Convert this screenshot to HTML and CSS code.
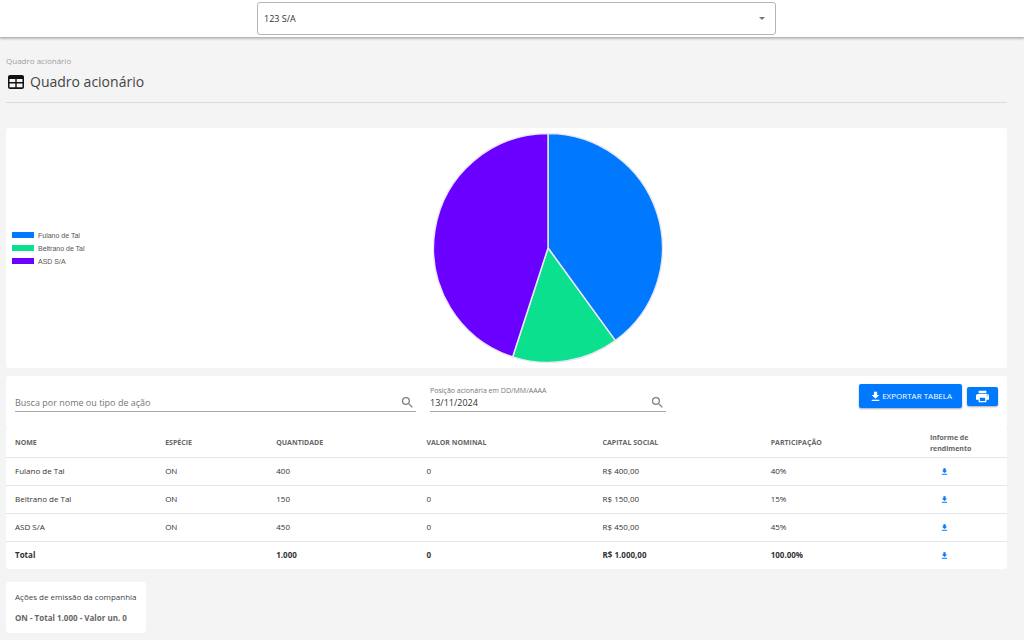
FILE: index.html
```html
<!DOCTYPE html>
<html lang="pt-BR">
<head>
<meta charset="utf-8">
<meta name="viewport" content="width=device-width, initial-scale=1">
<title>Quadro acionário</title>
<link rel="stylesheet" href="styles.css">
</head>
<body>
<svg class="defs" aria-hidden="true">
  <symbol id="download" viewBox="0 0 24 24"><path d="M19 9h-4V3H9v6H5l7 7 7-7zM5 18v2.500h14V18H5z"/></symbol>
  <symbol id="search" viewBox="0 0 24 24"><path d="M15.500 14h-.79l-.28-.27A6.471 6.471 0 0 0 16 9.500 6.500 6.500 0 1 0 9.500 16c1.610 0 3.090-.59 4.230-1.570l.27.28v.79l5 4.990L20.490 19l-4.990-5zm-6 0C7.010 14 5 11.990 5 9.500S7.010 5 9.500 5 14 7.010 14 9.500 11.990 14 9.500 14z"/></symbol>
</svg>
<header class="topbar">
  <div class="company">
    <select class="company-select" aria-label="Empresa"><option>123 S/A</option></select>
    <svg class="caret" viewBox="0 0 6 3" aria-hidden="true"><path d="M0 0h6L3 3z"/></svg>
  </div>
</header>
<main class="page">
  <div class="heading">
    <nav class="breadcrumb" aria-label="Localização">Quadro acionário</nav>
    <h1 class="title">
      <svg class="title-icon" viewBox="0 0 16 14" aria-hidden="true"><path fill-rule="evenodd" d="M2 0h12a2 2 0 0 1 2 2v10a2 2 0 0 1-2 2H2a2 2 0 0 1-2-2V2a2 2 0 0 1 2-2zM1.500 4v3h5.800V4zM8.700 4v3h5.800V4zM1.500 8.500v3.800h5.800V8.500zM8.700 8.500v3.800h5.800V8.500z"/></svg>
      Quadro acionário
    </h1>
  </div>

  <section class="card chart" aria-label="Participação por acionista">
    <ul class="legend">
      <li><span class="swatch blue"></span>Fulano de Tal</li>
      <li><span class="swatch green"></span>Beltrano de Tal</li>
      <li><span class="swatch purple"></span>ASD S/A</li>
    </ul>
    <div class="plot">
      <svg class="pie" viewBox="0 0 230 230" role="img" aria-label="Fulano de Tal 40%, Beltrano de Tal 15%, ASD S/A 45%">
        <path class="blue" d="M115 115V0.500A114.500 114.500 0 0 1 182.300 207.630z"/>
        <path class="green" d="M115 115L182.300 207.630A114.500 114.500 0 0 1 79.620 223.900z"/>
        <path class="purple" d="M115 115L79.620 223.900A114.500 114.500 0 0 1 115 0.500z"/>
      </svg>
    </div>
  </section>

  <section class="holders">
    <form class="card toolbar">
      <div class="field name-field">
        <input type="text" aria-label="Busca por nome ou tipo de ação" placeholder="Busca por nome ou tipo de ação">
        <svg class="search" aria-hidden="true"><use href="#search"/></svg>
      </div>
      <div class="date">
        <label for="position">Posição acionária em DD/MM/AAAA</label>
        <div class="field">
          <input id="position" type="text" value="13/11/2024">
          <svg class="search" aria-hidden="true"><use href="#search"/></svg>
        </div>
      </div>
      <div class="actions">
        <button class="button export" type="button"><svg aria-hidden="true"><use href="#download"/></svg>EXPORTAR TABELA</button>
        <button class="button print" type="button" aria-label="Imprimir"><svg viewBox="2 2 20 20" aria-hidden="true"><path d="M19 8H5c-1.660 0-3 1.340-3 3v6h4v4h12v-4h4v-6c0-1.660-1.340-3-3-3zm-3 11H8v-5h8v5zm3-7c-.55 0-1-.45-1-1s.45-1 1-1 1 .45 1 1-.45 1-1 1zm-1-9H6v4h12V3z"/></svg></button>
      </div>
    </form>
    <div class="card">
      <table class="table">
        <colgroup><col class="c-name"><col class="c-kind"><col class="c-qty"><col class="c-nominal"><col class="c-capital"><col class="c-share"><col></colgroup>
        <thead>
          <tr><th>NOME</th><th>ESPÉCIE</th><th>QUANTIDADE</th><th>VALOR NOMINAL</th><th>CAPITAL SOCIAL</th><th>PARTICIPAÇÃO</th><th>Informe de rendimento</th></tr>
        </thead>
        <tbody>
          <tr><td>Fulano de Tal</td><td>ON</td><td>400</td><td>0</td><td>R$ 400,00</td><td>40%</td><td><button class="get" type="button" aria-label="Baixar informe de Fulano de Tal"><svg aria-hidden="true"><use href="#download"/></svg></button></td></tr>
          <tr><td>Beltrano de Tal</td><td>ON</td><td>150</td><td>0</td><td>R$ 150,00</td><td>15%</td><td><button class="get" type="button" aria-label="Baixar informe de Beltrano de Tal"><svg aria-hidden="true"><use href="#download"/></svg></button></td></tr>
          <tr><td>ASD S/A</td><td>ON</td><td>450</td><td>0</td><td>R$ 450,00</td><td>45%</td><td><button class="get" type="button" aria-label="Baixar informe de ASD S/A"><svg aria-hidden="true"><use href="#download"/></svg></button></td></tr>
        </tbody>
        <tfoot>
          <tr><td>Total</td><td></td><td>1.000</td><td>0</td><td>R$ 1.000,00</td><td>100.00%</td><td><button class="get" type="button" aria-label="Baixar todos os informes"><svg aria-hidden="true"><use href="#download"/></svg></button></td></tr>
        </tfoot>
      </table>
    </div>
  </section>

  <section class="card issued">
    <p>Ações de emissão da companhia</p>
    <p class="issued-total">ON - Total 1.000 - Valor un. 0</p>
  </section>
</main>
</body>
</html>
```
FILE: styles.css
```css
* { box-sizing: border-box; }
body {
  margin: 0;
  background: #f4f4f4;
  color: #333;
  font: 8px/12px "Open Sans", "Noto Sans", sans-serif;
}
.defs { position: absolute; width: 0; height: 0; }
input, select, button { font: inherit; color: inherit; }

.topbar {
  display: flex;
  justify-content: center;
  padding: 2px 0 2px;
  background: #fff;
  border-bottom: 1px solid #b8b8b8;
  box-shadow: 0 1px 2px #bbb;
}
.company { display: grid; align-items: center; width: 51%; max-width: 519px; margin-left: 9px; }
.company-select {
  grid-area: 1 / 1;
  width: 100%;
  height: 33px;
  padding: 0 6px;
  border: 1px solid #b5b5b5;
  border-radius: 3px;
  background: #fff;
  font-size: 9px;
  appearance: none;
}
.caret { grid-area: 1 / 1; justify-self: end; width: 6px; height: 3px; margin-right: 11px; fill: #777; pointer-events: none; }

.page { padding: 17px 17px 6px 6px; }
.heading { padding-bottom: 10px; border-bottom: 1px solid #dcdcdc; }
.breadcrumb { color: #a0a0a0; }
.title { display: flex; align-items: center; gap: 6px; margin: 5px 0 0 2px; font-size: 14px; line-height: 20px; font-weight: 400; color: #444; }
.title-icon { width: 16px; height: 14px; fill: #111; }

.card { background: #fff; border-radius: 3px; }
.chart { display: flex; align-items: center; margin-top: 25px; padding: 5px 0; }
.legend { width: 82px; margin: 0; padding: 0 0 0 6px; list-style: none; font: 7px/13px "Liberation Sans", Arial, sans-serif; color: #555; }
.legend li { display: flex; align-items: center; gap: 4px; white-space: nowrap; }
.swatch { width: 22px; height: 6px; }
.blue { background: #0079ff; fill: #0079ff; }
.green { background: #0be08e; fill: #0be08e; }
.purple { background: #6a00ff; fill: #6a00ff; }
.plot { flex: 1; display: flex; justify-content: center; }
.pie { width: 230px; height: 230px; stroke: #e8e8f4; stroke-width: 1.5; stroke-linejoin: bevel; }

.holders { margin-top: 8px; }
.toolbar { display: flex; gap: 14px; align-items: flex-start; padding: 8px 9px 17px; }
.field { display: flex; align-items: center; padding-right: 1px; border-bottom: 1px solid #a8a8a8; }
.field input { flex: 1; min-width: 0; height: 17px; padding: 0; border: 0; background: none; outline: 0; font-size: 9px; }
.field input::placeholder { color: #757575; opacity: 1; }
.search { width: 15px; height: 15px; fill: #808080; }
.name-field { width: 40.8%; margin-top: 10px; }
.date { width: 24%; }
.date label { display: block; height: 10px; font-size: 7px; line-height: 14px; color: #777; }
.actions { display: flex; align-items: center; gap: 5px; margin-left: auto; }
.button {
  display: flex;
  align-items: center;
  justify-content: center;
  border: 0;
  border-radius: 2px;
  background: #0079ff;
  color: #fff;
  box-shadow: 0 1px 2px #0005;
}
.button svg { width: 13px; height: 13px; fill: #fff; }
.export { height: 24px; padding: 0 10px; white-space: nowrap; }
.print { width: 31px; height: 19px; padding: 0; }

.table { width: 100%; border-collapse: collapse; table-layout: fixed; }
.c-name { width: 15%; }
.c-kind { width: 11.1%; }
.c-qty { width: 15%; }
.c-nominal { width: 17.6%; }
.c-capital { width: 16.8%; }
.c-share { width: 15.9%; }
.table th, .table td { height: 28px; padding: 0 9px; text-align: left; }
.table th { font-size: 7px; line-height: 11px; color: #666; }
.table tbody tr, .table tfoot tr { border-top: 1px solid #e6e6e6; }
.table tfoot { font-weight: 700; }
.get { display: block; margin-left: 10px; padding: 0; border: 0; background: none; }
.get svg { display: block; width: 9px; height: 9px; fill: #0079ff; }

.issued { width: fit-content; margin-top: 13px; padding: 9px 9px 9px; color: #444; }
.issued p { margin: 0; }
.issued .issued-total { margin-top: 9px; font-weight: 700; color: #666; }
```
